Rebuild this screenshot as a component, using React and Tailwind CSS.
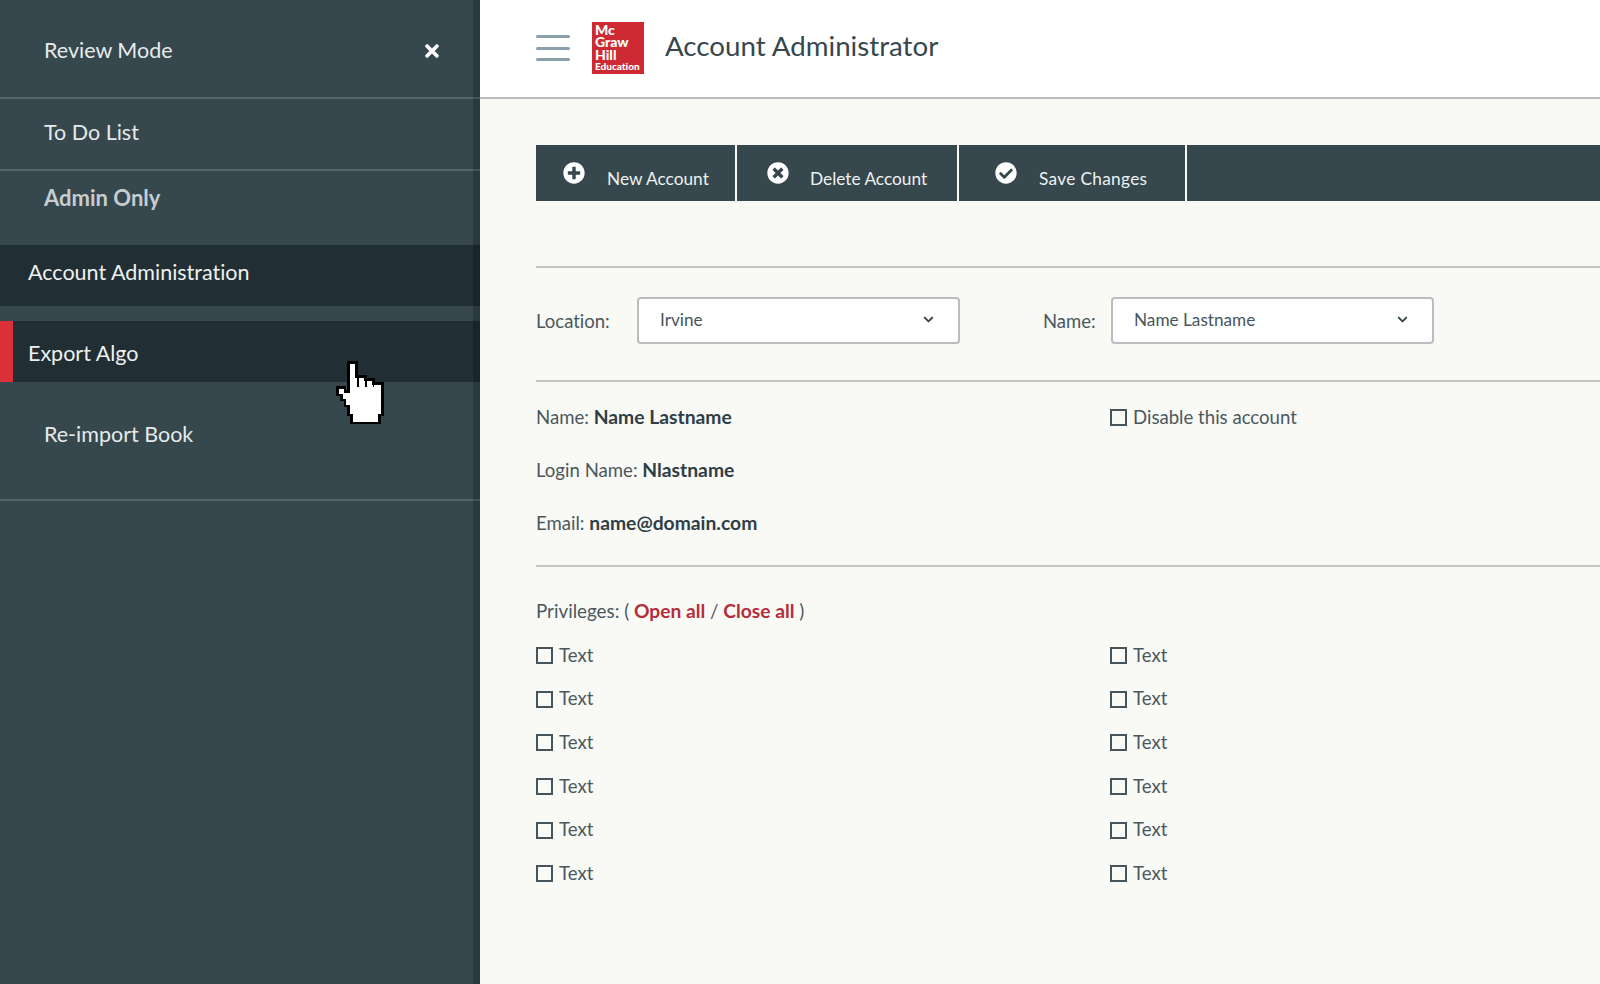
import React from "react";
import { FaPlusCircle, FaTimesCircle, FaCheckCircle, FaTimes } from "react-icons/fa";
import { ChevronDown } from "lucide-react";

const font = { fontFamily: '"Lato", "Liberation Sans", sans-serif', fontVariantLigatures: "none" };

function Hand() {
  return (
    <svg className="absolute left-[320px] top-[345px] pointer-events-none" width="80" height="84" viewBox="0 0 240 252" shapeRendering="crispEdges">
      <path d="M85 140V52H110V95H137V103H160V115H187V210H178V234H95V210H85V183H75V165H65V150H52V127H75V140H85Z" fill="#fff" stroke="#000" strokeWidth="8" />
      <path d="M113 95V125M137 103V125M160 115V125" stroke="#000" strokeWidth="5" fill="none" />
    </svg>
  );
}

function Select({ label, value, labelClass }) {
  return (
    <div className="flex items-center">
      <span className={labelClass}>{label}</span>
      <div className="flex h-[47px] w-[323px] items-center justify-between rounded-[4px] border-2 border-[#b9bdbd] bg-white pb-[2px] pl-[21px] pr-[22px] text-[17.2px] text-[#47555b]">
        <span>{value}</span>
        <ChevronDown size={15} strokeWidth={3.2} className="text-[#36474e]" />
      </div>
    </div>
  );
}

function Check({ label }) {
  return (
    <div className="flex h-[17px] items-center gap-[6px] text-[18.6px] text-[#4a585e]">
      <span className="h-[17px] w-[17px] border-2 border-[#46555b]" />
      <span>{label}</span>
    </div>
  );
}

function ToolButton({ icon, label, className, textClass }) {
  return (
    <div className={`flex items-center bg-[#36474e] text-[17.3px] text-[#eef1f1] ${className}`}>
      <span className="text-white">{icon}</span>
      <span className={textClass}>{label}</span>
    </div>
  );
}

const rows = [0, 1, 2, 3, 4, 5];

export default function App() {
  return (
    <div style={font} className="relative flex h-[984px] w-[1600px] overflow-hidden bg-[#f9f9f6]">
      <aside className="relative flex w-[480px] shrink-0 flex-col bg-[#36474e] text-[21.5px] text-[#e6ebea]">
        <div className="flex h-[99px] items-center justify-between border-b-2 border-[#55666d] pt-[3px] pl-[44px] pr-[38px]">
          <span>Review Mode</span>
          <FaTimes size={20} className="mt-[2px] text-white" />
        </div>
        <div className="flex h-[72px] items-center border-b-2 border-[#55666d] pb-[4px] pl-[44px]">To Do List</div>
        <div className="flex h-[74px] items-start pl-[44px] pt-[10px] text-[22px] font-bold text-[#c5cdd0]">Admin Only</div>
        <div className="flex h-[61px] items-center bg-[#212e34] pb-[7px] pl-[28px] text-[#eef1f0]">Account Administration</div>
        <div className="mt-[15px] flex h-[61px] items-center bg-[#212e34] pt-[3px] text-[#eef1f0]">
          <span className="mt-[-3px] h-[61px] w-[13px] bg-[#d9303a]" />
          <span className="pl-[15px]">Export Algo</span>
        </div>
        <div className="flex h-[119px] items-start border-b-2 border-[#55666d] pl-[44px] pt-[36px]">Re-import Book</div>
        <div className="absolute bottom-0 right-0 top-0 w-[7px] bg-black/20" />
      </aside>

      <main className="flex min-w-0 flex-1 flex-col">
        <header className="flex h-[99px] shrink-0 items-center border-b-2 border-[#b9bcbc] bg-white pl-[56px]">
          <div className="mb-[1px] flex w-[34px] flex-col gap-[8.5px]">
            <span className="h-[3px] rounded-full bg-[#8aa0aa]" />
            <span className="h-[3px] rounded-full bg-[#8aa0aa]" />
            <span className="h-[3px] rounded-full bg-[#8aa0aa]" />
          </div>
          <div className="mb-[1px] ml-[22px] flex h-[52px] w-[52px] flex-col justify-center bg-[#ce2a33] pl-[3px] font-black text-white">
            <span className="text-[14px] leading-[12.5px]">Mc</span>
            <span className="text-[14px] leading-[12.5px]">Graw</span>
            <span className="text-[14px] leading-[12.5px]">Hill</span>
            <span className="text-[10px] leading-[11px]">Education</span>
          </div>
          <h1 className="mb-[5px] ml-[21px] text-[27.7px] font-normal text-[#36474e]">Account Administrator</h1>
        </header>

        <div className="pl-[56px]">
          <div className="mt-[46px] flex h-[56px] gap-[2px]">
            <ToolButton className="w-[199px] pl-[27px]" textClass="ml-[22px] mt-[11px]" icon={<FaPlusCircle size={22} />} label="New Account" />
            <ToolButton className="w-[220px] pl-[30px]" textClass="ml-[21px] mt-[11px]" icon={<FaTimesCircle size={22} />} label="Delete Account" />
            <ToolButton className="w-[226px] pl-[36px]" textClass="ml-[22px] mt-[11px] tracking-[0.3px]" icon={<FaCheckCircle size={22} />} label="Save Changes" />
            <div className="flex-1 bg-[#36474e]" />
          </div>

          <div className="mt-[65px] h-[2px] bg-[#c4c6c5]" />
          <div className="flex h-[112px] items-center pb-[7px] text-[18.5px] text-[#4a585e]">
            <Select label="Location:" value="Irvine" labelClass="w-[101px] pt-[3px]" />
            <div className="ml-[83px]">
              <Select label="Name:" value="Name Lastname" labelClass="w-[68px] pt-[3px]" />
            </div>
          </div>
          <div className="h-[2px] bg-[#c4c6c5]" />

          <div className="grid h-[183px] grid-cols-[574px_1fr] pt-[23px] text-[18.6px] leading-[24px] text-[#4a585e]">
            <div className="flex flex-col gap-[29px]">
              <div>Name: <b className="text-[19.3px] text-[#2f3e45]">Name Lastname</b></div>
              <div>Login Name: <b className="text-[19.3px] text-[#2f3e45]">Nlastname</b></div>
              <div>Email: <b className="text-[19.3px] text-[#2f3e45]">name@domain.com</b></div>
            </div>
            <div className="flex h-[24px] items-center gap-[6px]">
              <span className="h-[17px] w-[17px] border-2 border-[#46555b]" />
              <span>Disable this account</span>
            </div>
          </div>
          <div className="h-[2px] bg-[#c4c6c5]" />

          <div className="mt-[32px] text-[18.8px] leading-[24px] text-[#4a585e]">
            Privileges: ( <b className="text-[19.2px] text-[#b52d3a]">Open all</b> / <b className="text-[19.2px] text-[#b52d3a]">Close all</b> )
          </div>
          <div className="mt-[24px] grid grid-cols-[574px_1fr] gap-y-[26.7px]">
            {rows.map((r) => (
              <React.Fragment key={r}>
                <Check label="Text" />
                <Check label="Text" />
              </React.Fragment>
            ))}
          </div>
        </div>
      </main>
      <Hand />
    </div>
  );
}
